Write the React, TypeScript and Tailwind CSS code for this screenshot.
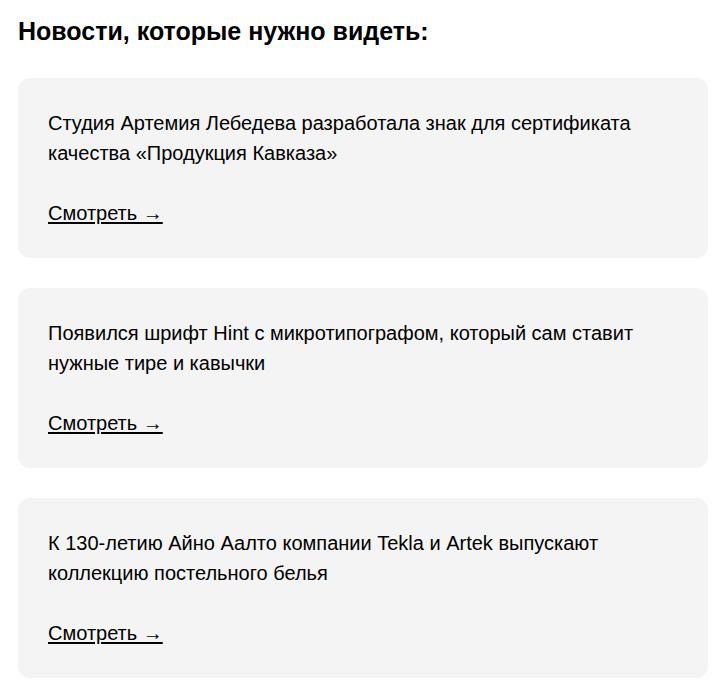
import React from "react";

const news = [
  "Студия Артемия Лебедева разработала знак для сертификата качества «Продукция Кавказа»",
  "Появился шрифт Hint с микротипографом, который сам ставит нужные тире и кавычки",
  "К 130-летию Айно Аалто компании Tekla и Artek выпускают коллекцию постельного белья",
];

export default function App() {
  return (
    <div className="min-h-screen bg-white px-[18px] pt-[17px] pb-8 text-black font-['Liberation_Sans',Arial,sans-serif]">
      <h2 className="text-[25px] leading-[28px] font-bold mb-[33px]">Новости, которые нужно видеть:</h2>
      <div className="flex flex-col gap-[30px]">
        {news.map((text) => (
          <div key={text} className="bg-[#f4f4f4] rounded-[12px] p-[30px] text-[20px] leading-[30px]">
            <p className="pr-[40px]">{text}</p>
            <a href="#" className="inline-block mt-[30px] underline underline-offset-[2px]">
              Смотреть →
            </a>
          </div>
        ))}
      </div>
    </div>
  );
}
